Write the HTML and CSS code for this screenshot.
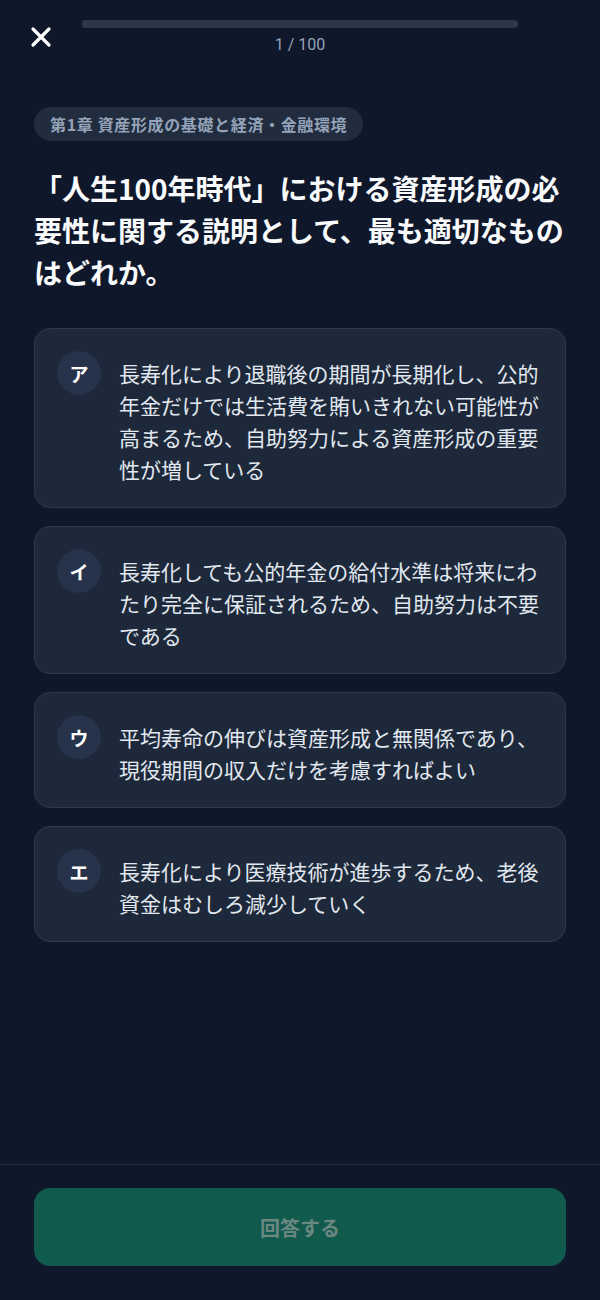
FILE: index.html
```html
<!DOCTYPE html>
<html lang="ja">
<head>
<meta charset="utf-8">
<title>Quiz</title>
<link rel="stylesheet" href="styles.css">
</head>
<body>
<div class="app">
  <header class="top">
    <button class="close" aria-label="閉じる">
      <svg width="24" height="24" viewBox="0 0 24 24"><path d="M4 4L20 20M20 4L4 20" stroke="#ffffff" stroke-width="3.2" stroke-linecap="round" fill="none"/></svg>
    </button>
    <div class="progress">
      <div class="track"><div class="fill" style="width:1%"></div></div>
      <div class="count">1 / 100</div>
    </div>
    <div class="spacer"></div>
  </header>

  <main class="main">
    <span class="tag">第1章 資産形成の基礎と経済・金融環境</span>
    <h1 class="question">「人生100年時代」における資産形成の必要性に関する説明として、最も適切なものはどれか。</h1>

    <div class="options">
      <div class="option">
        <span class="letter">ア</span>
        <p class="text">長寿化により退職後の期間が長期化し、公的年金だけでは生活費を賄いきれない可能性が高まるため、自助努力による資産形成の重要性が増している</p>
      </div>
      <div class="option">
        <span class="letter">イ</span>
        <p class="text">長寿化しても公的年金の給付水準は将来にわたり完全に保証されるため、自助努力は不要である</p>
      </div>
      <div class="option">
        <span class="letter">ウ</span>
        <p class="text">平均寿命の伸びは資産形成と無関係であり、現役期間の収入だけを考慮すればよい</p>
      </div>
      <div class="option">
        <span class="letter">エ</span>
        <p class="text">長寿化により医療技術が進歩するため、老後資金はむしろ減少していく</p>
      </div>
    </div>
  </main>

  <footer class="footer">
    <button class="answer">回答する</button>
  </footer>
</div>
</body>
</html>
```

FILE: styles.css
```css
* { box-sizing: border-box; }
html, body {
  margin: 0;
  padding: 0;
  background: #0f172a;
}
body {
  font-family: "Noto Sans CJK JP", "Noto Sans", sans-serif;
  color: #f1f5f9;
}
.app {
  display: flex;
  flex-direction: column;
  min-height: 100vh;
  height: 1300px;
}
.top {
  display: grid;
  grid-template-columns: 53px 1fr 53px;
  padding: 20px 29px 0;
}
.close {
  background: none;
  border: 0;
  padding: 0;
  margin-top: 5px;
  width: 24px;
  height: 24px;
  display: block;
  cursor: pointer;
}
.close svg { display: block; }
.progress {
  display: flex;
  flex-direction: column;
  align-items: center;
  gap: 7px;
}
.track {
  width: 100%;
  height: 8px;
  border-radius: 4px;
  background: #2c3749;
  overflow: hidden;
}
.fill {
  height: 100%;
  background: #2c3749;
}
.count {
  font-family: Roboto, "Noto Sans", sans-serif;
  font-size: 16px;
  line-height: 20px;
  color: #94a3b8;
}
.main {
  flex: 1;
  padding: 52px 34px 0;
  display: flex;
  flex-direction: column;
  align-items: flex-start;
}
.tag {
  display: inline-block;
  height: 34px;
  line-height: 34px;
  padding: 0 16px;
  border-radius: 17px;
  background: #212c3e;
  color: #94a3b8;
  font-size: 16px;
  font-weight: 700;
  letter-spacing: 0.04em;
}
.question {
  margin: 26px -3px 0 0;
  font-size: 28px;
  line-height: 42px;
  font-weight: 700;
  color: #f8fafc;
}
.options {
  margin-top: 35px;
  width: 100%;
  display: flex;
  flex-direction: column;
  gap: 18px;
}
.option {
  display: flex;
  align-items: flex-start;
  gap: 18px;
  padding: 22px;
  border: 1px solid #2d394d;
  border-radius: 16px;
  background: #1d283a;
}
.letter {
  flex: none;
  width: 44px;
  height: 44px;
  border-radius: 50%;
  background: #27334a;
  display: flex;
  align-items: center;
  justify-content: center;
  font-size: 19px;
  font-weight: 700;
  color: #ffffff;
}
.text {
  margin: 6px 0 0;
  flex: 1;
  font-size: 21px;
  line-height: 32px;
  color: #e2e8f0;
}
.footer {
  border-top: 1px solid #1e293b;
  padding: 23px 34px 34px;
}
.answer {
  display: block;
  width: 100%;
  height: 78px;
  border: 0;
  border-radius: 16px;
  background: #115a4e;
  color: #6a8780;
  font-family: "Noto Sans CJK JP", "Noto Sans", sans-serif;
  font-size: 20px;
  font-weight: 700;
}
```
